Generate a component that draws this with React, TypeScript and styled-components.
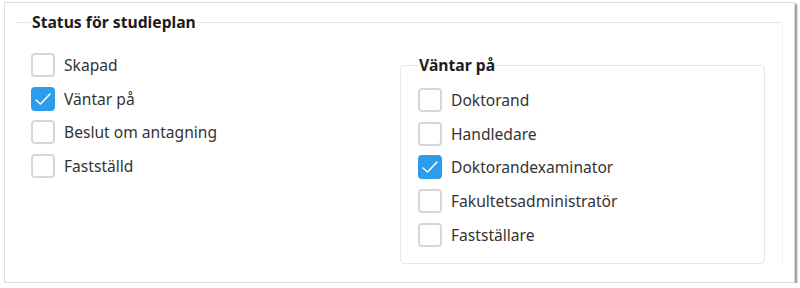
import styled, { createGlobalStyle } from "styled-components";

const GlobalStyle = createGlobalStyle`
  html, body {
    margin: 0;
    padding: 0;
    background: #ffffff;
  }
  body {
    font-family: "Noto Sans", "Open Sans", sans-serif;
    color: #333333;
  }
`;

const Frame = styled.div`
  box-sizing: border-box;
  margin: 2px 0 0 4px;
  width: 791px;
  height: 281px;
  background: #ffffff;
  border: 1px solid #dcdcdc;
  box-shadow: 2px 2px 2px rgba(0, 0, 0, 0.45);
  padding: 9px 11px 0 11px;
`;

const StatusSet = styled.fieldset`
  margin: 0;
  padding: 0 17px 0 15px;
  border: none;
  border-top: 1px solid #e6e6e6;
  border-right: 1px solid #f0f0f0;
  border-top-right-radius: 4px;
`;

const Legend = styled.legend`
  padding: 0 1px;
  font-size: 15.7px;
  font-weight: 700;
  line-height: 20px;
  color: #1c1c1c;
`;

const Columns = styled.div`
  display: grid;
  grid-template-columns: 369px 1fr;
  align-items: start;
  padding-top: 16px;
`;

const List = styled.div`
  display: flex;
  flex-direction: column;
`;

const WaitingSet = styled.fieldset`
  margin: 7px 0 0 0;
  padding: 8px 17px 11px 17px;
  border: 1px solid #e8e8e8;
  border-radius: 4px;
`;

const Row = styled.label`
  display: flex;
  align-items: center;
  gap: 9px;
  height: 33.75px;
  font-size: 15.6px;
  color: #333333;
`;

const Box = styled.span<{ $checked?: boolean }>`
  box-sizing: border-box;
  width: 24px;
  height: 24px;
  flex: none;
  border-radius: 4px;
  border: 2px solid ${(p) => (p.$checked ? "#2d9cea" : "#d3d8de")};
  background: ${(p) => (p.$checked ? "#2d9cea" : "#ffffff")};
  display: flex;
  align-items: center;
  justify-content: center;
`;

function Check({ label, checked }: { label: string; checked?: boolean }) {
  return (
    <Row>
      <Box $checked={checked}>
        {checked && (
          <svg width="20" height="20" viewBox="0 0 20 20">
            <polyline
              points="3,11 7.5,15 17,5"
              fill="none"
              stroke="#ffffff"
              strokeWidth="1.5"
              strokeLinecap="round"
              strokeLinejoin="round"
            />
          </svg>
        )}
      </Box>
      {label}
    </Row>
  );
}

export default function App() {
  return (
    <>
      <GlobalStyle />
      <Frame>
        <StatusSet>
          <Legend>Status för studieplan</Legend>
          <Columns>
            <List>
              <Check label="Skapad" />
              <Check label="Väntar på" checked />
              <Check label="Beslut om antagning" />
              <Check label="Fastställd" />
            </List>
            <WaitingSet>
              <Legend>Väntar på</Legend>
              <List>
                <Check label="Doktorand" />
                <Check label="Handledare" />
                <Check label="Doktorandexaminator" checked />
                <Check label="Fakultetsadministratör" />
                <Check label="Fastställare" />
              </List>
            </WaitingSet>
          </Columns>
        </StatusSet>
      </Frame>
    </>
  );
}
